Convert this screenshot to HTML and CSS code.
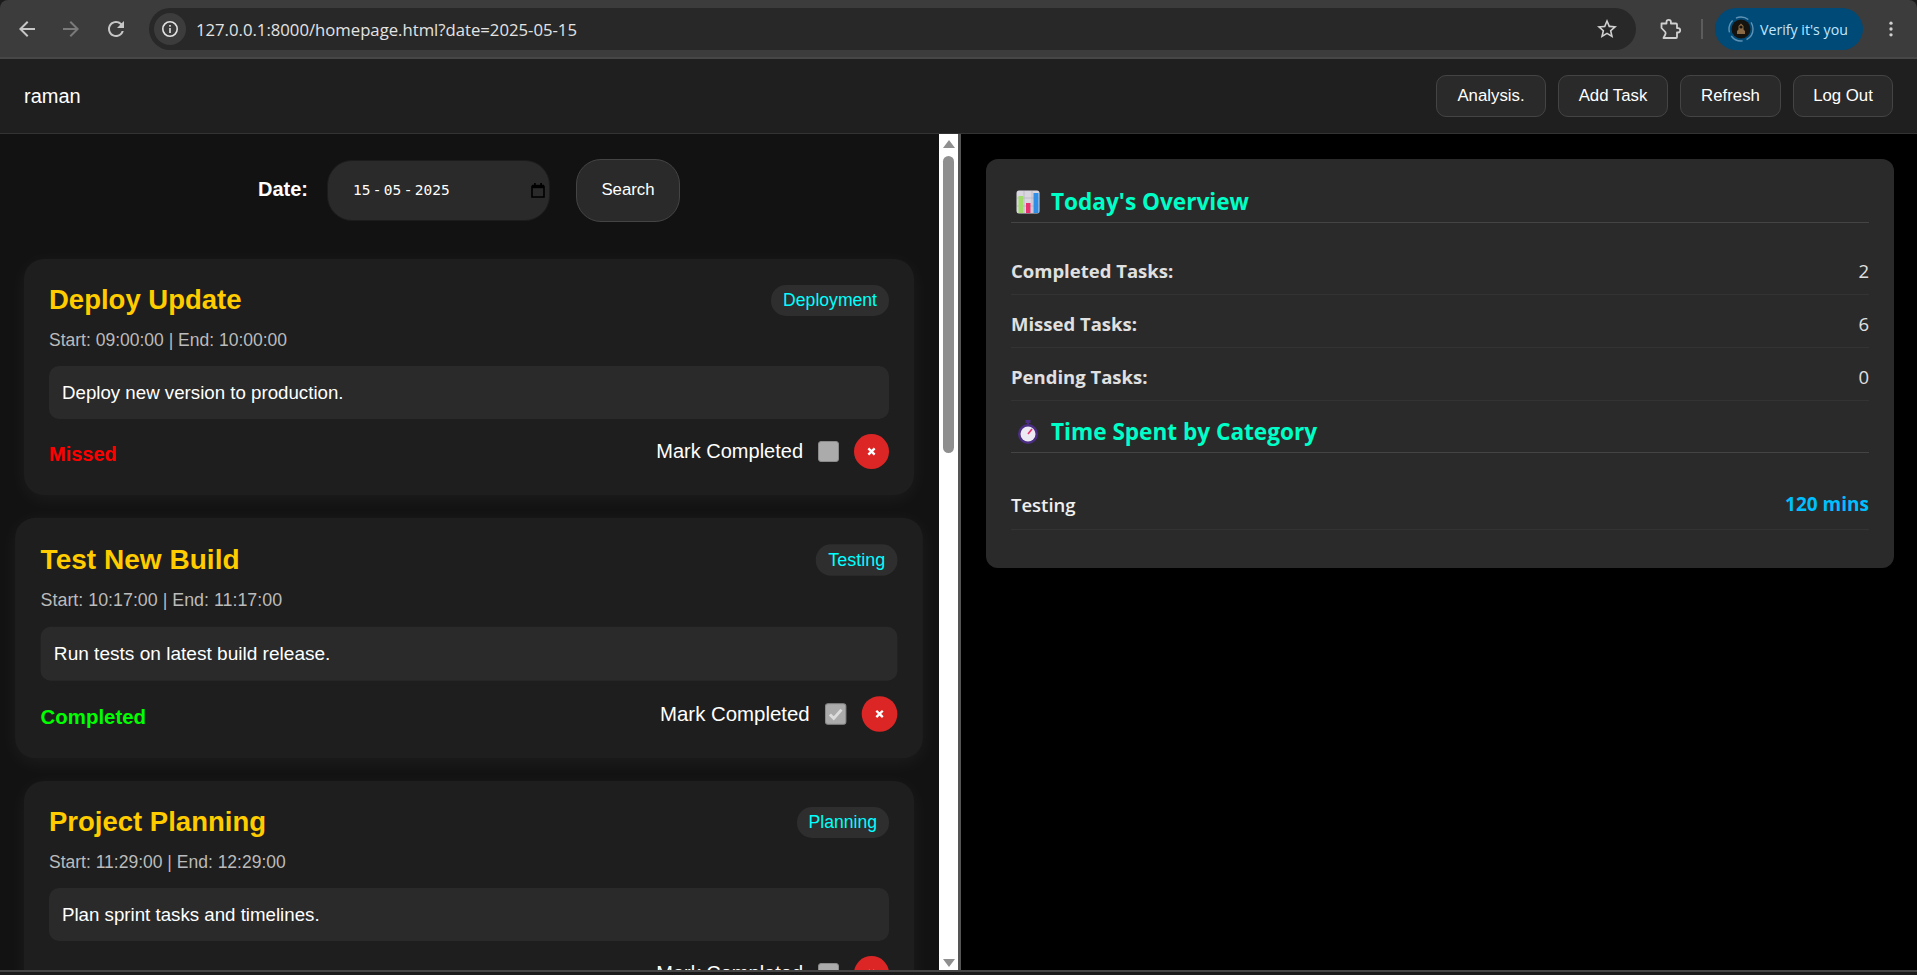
FILE: index.html
```html
<!DOCTYPE html>
<html lang="en">
  <head>
    <meta charset="UTF-8" />
    <meta name="viewport" content="width=device-width, initial-scale=1.0" />
    <title>Homepage</title>
    <link rel="stylesheet" href="styles.css">
  </head>
  <body>
    <div class="browser-bar">
      <svg class="tool-icon back-icon" viewBox="0 0 24 24"><path d="M20 11H7.83l5.59-5.59L12 4l-8 8 8 8 1.41-1.41L7.83 13H20v-2z"/></svg>
      <svg class="tool-icon forward-icon" viewBox="0 0 24 24"><path d="M4 11h12.17l-5.59-5.59L12 4l8 8-8 8-1.41-1.41L16.17 13H4v-2z"/></svg>
      <svg class="tool-icon reload-icon" viewBox="0 0 24 24"><path d="M17.65 6.35A7.958 7.958 0 0 0 12 4c-4.42 0-7.99 3.58-7.99 8s3.57 8 7.99 8c3.73 0 6.84-2.55 7.73-6h-2.08A5.99 5.99 0 0 1 12 18c-3.31 0-6-2.69-6-6s2.69-6 6-6c1.66 0 3.14.69 4.22 1.78L13 11h7V4l-2.35 2.35z"/></svg>
      <div class="address-bar">
        <span class="site-info">
          <svg viewBox="0 0 20 20"><circle cx="10" cy="10" r="7.2" fill="none" stroke="#e3e3e3" stroke-width="1.6"/><rect x="9.2" y="9" width="1.6" height="5" fill="#e3e3e3"/><rect x="9.2" y="6" width="1.6" height="1.7" fill="#e3e3e3"/></svg>
        </span>
        <span class="url">127.0.0.1:8000/homepage.html?date=2025-05-15</span>
        <svg class="star-icon" viewBox="0 0 24 24"><path d="M22 9.24l-7.19-.62L12 2 9.19 8.63 2 9.24l5.46 4.73L5.82 21 12 17.27 18.18 21l-1.63-7.03L22 9.24zM12 15.4l-3.76 2.27 1-4.28-3.32-2.88 4.38-.38L12 6.1l1.71 4.04 4.38.38-3.32 2.88 1 4.28L12 15.4z"/></svg>
      </div>
      <svg class="ext-icon" viewBox="0 0 24 24"><path d="M3.500 6.500h5V5a2.200 2.200 0 0 1 4.400 0v1.500H18a1 1 0 0 1 1 1v3.600h1a2.200 2.200 0 0 1 0 4.400h-1V20a1 1 0 0 1-1 1H5.500l1.800-3.500a2.600 2.600 0 0 0 0-2.500L3.500 11z" fill="none" stroke="#d0d0d0" stroke-width="1.800" stroke-linejoin="round"/></svg>
      <span class="bar-sep"></span>
      <div class="profile-pill">
        <svg class="avatar" viewBox="0 0 26 26">
          <circle cx="13" cy="13" r="12" fill="none" stroke="#5f93b5" stroke-width="1.4" stroke-dasharray="13 4"/>
          <circle cx="13" cy="13" r="9.5" fill="#15130f"/>
          <path d="M9 18v-3l1.5-1.5V10L13 7.5 15.5 10v3.500L17 15v3z" fill="#8a6a45"/>
          <circle cx="13" cy="11" r="1.6" fill="#15130f"/>
        </svg>
        <span>Verify it's you</span>
      </div>
      <svg class="menu-icon" viewBox="0 0 6 24"><circle cx="3" cy="5" r="2"/><circle cx="3" cy="12" r="2"/><circle cx="3" cy="19" r="2"/></svg>
    </div>

    <header class="navbar">
      <span class="username">raman</span>
      <nav class="nav-actions">
        <button class="nav-btn analysis-btn">Analysis.</button>
        <button class="nav-btn add-btn">Add Task</button>
        <button class="nav-btn refresh-btn">Refresh</button>
        <button class="nav-btn logout-btn">Log Out</button>
      </nav>
    </header>

    <main class="layout">
      <section class="task-panel">
        <form class="date-form">
          <label class="date-label">Date:</label>
          <div class="date-input">
            <span>15 - 05 - 2025</span>
            <svg viewBox="0 0 14 15"><path d="M1 3.500h12v10.500H1z" fill="none" stroke="#000" stroke-width="1.600"/><path d="M1 1.800h12v3.400H1z" fill="#000"/><rect x="3" y="0" width="1.800" height="2.500" fill="#000"/><rect x="9.200" y="0" width="1.800" height="2.500" fill="#000"/></svg>
          </div>
          <button type="button" class="search-btn">Search</button>
        </form>

        <article class="task-card">
          <div class="task-head">
            <h2 class="task-title">Deploy Update</h2>
            <span class="task-tag">Deployment</span>
          </div>
          <p class="task-time">Start: 09:00:00 | End: 10:00:00</p>
          <p class="task-desc">Deploy new version to production.</p>
          <div class="task-foot">
            <span class="status missed">Missed</span>
            <div class="task-controls">
              <span class="mark-label">Mark Completed</span>
              <span class="check-box"></span>
              <span class="delete-btn"><svg viewBox="0 0 10 10"><path d="M1.500 1.500l7 7M8.500 1.500l-7 7" stroke="#fff" stroke-width="2.600"/></svg></span>
            </div>
          </div>
        </article>

        <article class="task-card hovered">
          <div class="task-head">
            <h2 class="task-title">Test New Build</h2>
            <span class="task-tag">Testing</span>
          </div>
          <p class="task-time">Start: 10:17:00 | End: 11:17:00</p>
          <p class="task-desc">Run tests on latest build release.</p>
          <div class="task-foot">
            <span class="status completed">Completed</span>
            <div class="task-controls">
              <span class="mark-label">Mark Completed</span>
              <span class="check-box"><svg viewBox="0 0 20 20"><path d="M4 10.500l4 4 8-9" fill="none" stroke="#dcdcdc" stroke-width="3"/></svg></span>
              <span class="delete-btn"><svg viewBox="0 0 10 10"><path d="M1.500 1.500l7 7M8.500 1.500l-7 7" stroke="#fff" stroke-width="2.600"/></svg></span>
            </div>
          </div>
        </article>

        <article class="task-card">
          <div class="task-head">
            <h2 class="task-title">Project Planning</h2>
            <span class="task-tag">Planning</span>
          </div>
          <p class="task-time">Start: 11:29:00 | End: 12:29:00</p>
          <p class="task-desc">Plan sprint tasks and timelines.</p>
          <div class="task-foot">
            <span class="status"></span>
            <div class="task-controls">
              <span class="mark-label">Mark Completed</span>
              <span class="check-box"></span>
              <span class="delete-btn"><svg viewBox="0 0 10 10"><path d="M1.500 1.500l7 7M8.500 1.500l-7 7" stroke="#fff" stroke-width="2.600"/></svg></span>
            </div>
          </div>
        </article>
      </section>

      <div class="scroll-track">
        <span class="arrow-up"></span>
        <div class="scroll-rail"><span class="scroll-thumb"></span></div>
        <span class="arrow-down"></span>
      </div>

      <aside class="overview-panel">
        <div class="overview-card">
          <h3 class="overview-title">
            <svg class="title-icon" viewBox="0 0 24 24">
              <rect x="0.500" y="0.500" width="23" height="23" rx="2.500" fill="#d9d6e0"/>
              <path d="M8 1v22M16 1v22M1 8h22M1 16h22" stroke="#b9b5c4" stroke-width="0.800"/>
              <rect x="2.500" y="6" width="4.500" height="17" fill="#9fdc6a"/>
              <rect x="10" y="13" width="4.500" height="10" fill="#e8326f"/>
              <rect x="17.500" y="3" width="5" height="20" fill="#2f8fe6"/>
            </svg>
            Today's Overview
          </h3>
          <div class="stat-row"><strong>Completed Tasks:</strong><span>2</span></div>
          <div class="stat-row"><strong>Missed Tasks:</strong><span>6</span></div>
          <div class="stat-row"><strong>Pending Tasks:</strong><span>0</span></div>

          <h3 class="overview-title time-title">
            <svg class="title-icon" viewBox="0 0 24 24">
              <rect x="9.500" y="0" width="5" height="3" fill="#4b2e83"/>
              <rect x="11" y="2" width="2" height="3" fill="#4b2e83"/>
              <circle cx="12" cy="14" r="10" fill="#4b2e83"/>
              <circle cx="12" cy="14" r="7.500" fill="#eceaf2"/>
              <path d="M12 14l4-5" stroke="#e8326f" stroke-width="1.600"/>
            </svg>
            Time Spent by Category
          </h3>
          <div class="stat-row category-row"><span class="category-name">Testing</span><span class="category-time">120 mins</span></div>
        </div>
      </aside>
    </main>
    <div class="window-edge"></div>
  </body>
</html>
```

FILE: styles.css
```css
* {
  box-sizing: border-box;
}
html,
body {
  margin: 0;
  padding: 0;
  height: 975px;
  overflow: hidden;
}
body {
  font-family: "Liberation Sans", Arial, sans-serif;
  background-color: #1b1b1b;
  color: #fff;
  display: flex;
  flex-direction: column;
}

/* browser chrome */
.browser-bar {
  height: 59px;
  flex-shrink: 0;
  background-color: #3c3c3c;
  border-radius: 8px 8px 0 0;
  display: flex;
  align-items: center;
  padding: 1px 0 0 0;
  border-bottom: 2px solid #474747;
}
.tool-icon {
  width: 24px;
  height: 24px;
  fill: #c7c7c7;
  flex-shrink: 0;
}
.back-icon {
  margin-left: 15px;
}
.forward-icon {
  margin-left: 20px;
  fill: #7a7a7a;
}
.reload-icon {
  margin-left: 21px;
}
.address-bar {
  margin-left: 21px;
  width: 1487px;
  height: 42px;
  border-radius: 21px;
  background-color: #282828;
  display: flex;
  align-items: center;
  padding: 0 17px 0 5px;
}
.site-info {
  width: 32px;
  height: 32px;
  border-radius: 50%;
  background-color: #3c3c3c;
  display: flex;
  align-items: center;
  justify-content: center;
}
.site-info svg {
  width: 20px;
  height: 20px;
}
.url {
  margin-left: 10px;
  font-family: "Open Sans", sans-serif;
  font-size: 16.700px;
  color: #e3e3e3;
  flex: 1;
}
.star-icon {
  width: 24px;
  height: 24px;
  fill: #d0d0d0;
}
.ext-icon {
  width: 24px;
  height: 24px;
  margin-left: 22px;
}
.bar-sep {
  width: 2px;
  height: 20px;
  background-color: #5c5c5c;
  margin-left: 19px;
}
.profile-pill {
  margin-left: 12px;
  width: 148px;
  height: 42px;
  border-radius: 21px;
  background-color: #004a77;
  display: flex;
  align-items: center;
  padding-left: 13px;
  color: #c2e7ff;
  font-family: "Open Sans", sans-serif;
  font-size: 14.200px;
}
.avatar {
  width: 26px;
  height: 26px;
  margin-right: 6px;
}
.menu-icon {
  width: 6px;
  height: 20px;
  margin-left: 25px;
  fill: #d0d0d0;
}

/* top navbar */
.navbar {
  height: 75px;
  flex-shrink: 0;
  background-color: #1f1f1f;
  border-bottom: 1px solid #333;
  display: flex;
  align-items: center;
  justify-content: space-between;
  padding: 0 24px;
}
.username {
  font-size: 20px;
}
.nav-actions {
  display: flex;
  gap: 12px;
}
.nav-btn {
  height: 42px;
  padding: 0;
  white-space: nowrap;
  font-family: inherit;
  font-size: 16.800px;
  color: #fff;
  background-color: #2a2a2a;
  border: 1px solid #444;
  border-radius: 10px;
}
.analysis-btn {
  width: 110px;
}
.add-btn {
  width: 110px;
}
.refresh-btn {
  width: 101px;
}
.logout-btn {
  width: 100px;
}

/* main columns */
.layout {
  flex: 1;
  display: flex;
  min-height: 0;
}
.task-panel {
  width: 939px;
  flex-shrink: 0;
  background-color: #121212;
  padding: 25px 25px 0 24px;
  overflow: hidden;
}
.date-form {
  display: flex;
  align-items: center;
  justify-content: center;
  gap: 19px;
  margin-bottom: 37px;
}
.date-label {
  font-size: 20px;
  font-weight: bold;
  margin-bottom: 2px;
}
.date-input {
  width: 223px;
  height: 61px;
  border-radius: 25px;
  background-color: #2a2a2a;
  border: 1px solid #1c1c1c;
  display: flex;
  align-items: center;
  justify-content: space-between;
  padding: 0 4px 1px 25px;
  font-family: "DejaVu Sans Mono", monospace;
  font-size: 14.500px;
  word-spacing: -6.400px;
}
.date-input svg {
  width: 14px;
  height: 15px;
}
.search-btn {
  width: 104px;
  height: 63px;
  margin-left: 7px;
  padding: 0 0 2px 0;
  font-family: inherit;
  font-size: 16.800px;
  color: #fff;
  background-color: #2a2a2a;
  border: 1px solid #444;
  border-radius: 25px;
}

/* task cards */
.task-card {
  background-color: #1e1e1e;
  border-radius: 20px;
  padding: 25px;
  height: 236px;
  margin-bottom: 25px;
  box-shadow: 0 4px 20px rgba(255, 255, 255, 0.05);
}
.task-card.hovered {
  transform: scale(1.02);
}
.task-head {
  display: flex;
  justify-content: space-between;
  align-items: center;
  height: 32px;
}
.task-title {
  margin: 0;
  font-size: 27.500px;
  font-weight: bold;
  color: #ffcc00;
}
.task-tag {
  height: 31px;
  line-height: 31px;
  padding: 0 12px;
  border-radius: 15px;
  background-color: #2e2e2e;
  color: #00ffff;
  font-size: 17.600px;
}
.task-time {
  margin: 14px 0 16px 0;
  font-size: 17.500px;
  line-height: 20px;
  color: #bbb;
}
.task-desc {
  margin: 0;
  padding: 16px 13px;
  height: 53px;
  line-height: 21px;
  font-size: 18.700px;
  background-color: #2a2a2a;
  border-radius: 10px;
}
.task-foot {
  margin-top: 15px;
  display: flex;
  justify-content: space-between;
  align-items: center;
}
.status {
  font-size: 20px;
  font-weight: bold;
  padding-top: 6px;
}
.missed {
  color: #ff0000;
}
.completed {
  color: #00ff00;
}
.task-controls {
  display: flex;
  align-items: center;
}
.mark-label {
  font-size: 20px;
}
.check-box {
  width: 21px;
  height: 21px;
  margin: 0 15px;
  background-color: #ababab;
  border: 1px solid #8a8a8a;
  border-radius: 3px;
  display: flex;
}
.check-box svg {
  width: 100%;
  height: 100%;
}
.delete-btn {
  width: 35px;
  height: 35px;
  border-radius: 50%;
  background-color: #dc2626;
  display: flex;
  align-items: center;
  justify-content: center;
}
.delete-btn svg {
  width: 9px;
  height: 9px;
}

/* scrollbar drawn beside the list */
.scroll-track {
  width: 19px;
  flex-shrink: 0;
  background-color: #fff;
  display: flex;
  flex-direction: column;
  align-items: center;
}
.arrow-up,
.arrow-down {
  width: 0;
  height: 0;
  flex-shrink: 0;
  border-left: 6px solid transparent;
  border-right: 6px solid transparent;
}
.arrow-up {
  margin-top: 6px;
  border-bottom: 8px solid #8f8f8f;
}
.arrow-down {
  margin-bottom: 3px;
  border-top: 8px solid #8f8f8f;
}
.scroll-rail {
  flex: 1;
  padding-top: 8px;
}
.scroll-thumb {
  display: block;
  width: 11px;
  height: 297px;
  border-radius: 6px;
  background-color: #8f8f8f;
}

/* overview panel */
.overview-panel {
  flex: 1;
  background-color: #000;
  border-left: 3px solid #555;
  padding: 25px 23px 0 25px;
}
.overview-card {
  height: 409px;
  background-color: #2a2a2a;
  border-radius: 12px;
  padding: 25px 25px 0 25px;
  font-family: "Open Sans", sans-serif;
}
.overview-title {
  margin: 0 0 19px 0;
  height: 39px;
  display: flex;
  align-items: center;
  gap: 11px;
  padding: 0 0 3px 5px;
  font-size: 22.600px;
  font-weight: 700;
  color: #00ffc8;
  border-bottom: 1px solid #444;
}
.title-icon {
  width: 24px;
  height: 24px;
  flex-shrink: 0;
}
.time-title {
  margin-top: 13px;
}
.stat-row {
  height: 53px;
  padding-top: 4px;
  display: flex;
  align-items: center;
  justify-content: space-between;
  font-size: 18.500px;
  color: #e0e0e0;
  border-bottom: 1px solid #333;
}
.category-row {
  height: 58px;
  padding-top: 7px;
}
.category-name {
  color: #f0f0f0;
  font-weight: 600;
}
.category-time {
  color: #00bfff;
  font-weight: 700;
  font-size: 19px;
}
.window-edge {
  height: 5px;
  flex-shrink: 0;
  background-color: #1b1b1b;
  border-top: 2px solid #444;
}
```
